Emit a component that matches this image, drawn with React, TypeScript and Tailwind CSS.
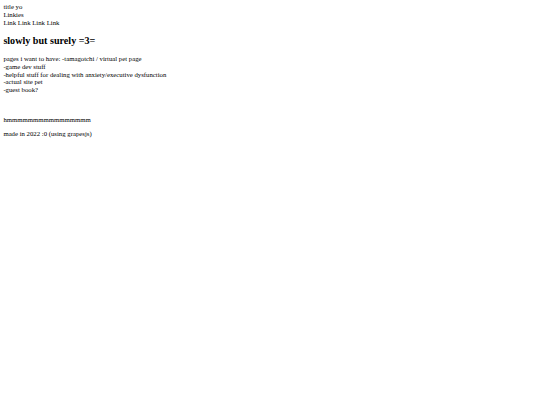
export default function App() {
  return (
    <div className="min-h-screen bg-white p-[3.375px] font-['Liberation_Serif',serif] text-[6.75px] leading-[1.15] text-black">
      <div>title yo</div>
      <div>Linkies</div>
      <div>Link Link Link Link</div>
      <h2 className="my-[8.4px] text-[10.125px] font-bold leading-[1.15]">slowly but surely =3=</h2>
      <div>
        pages i want to have: -tamagotchi / virtual pet page
        <br />
        -game dev stuff
        <br />
        -helpful stuff for dealing with anxiety/executive dysfunction
        <br />
        -actual site pet
        <br />
        -guest book?
      </div>
      <div className="h-[15.5px]" />
      <p className="mt-[6.75px] mb-[6px]">hmmmmmmmmmmmmmmmm</p>
      <p className="my-[6px]">made in 2022 :0 (using grapesjs)</p>
    </div>
  );
}
